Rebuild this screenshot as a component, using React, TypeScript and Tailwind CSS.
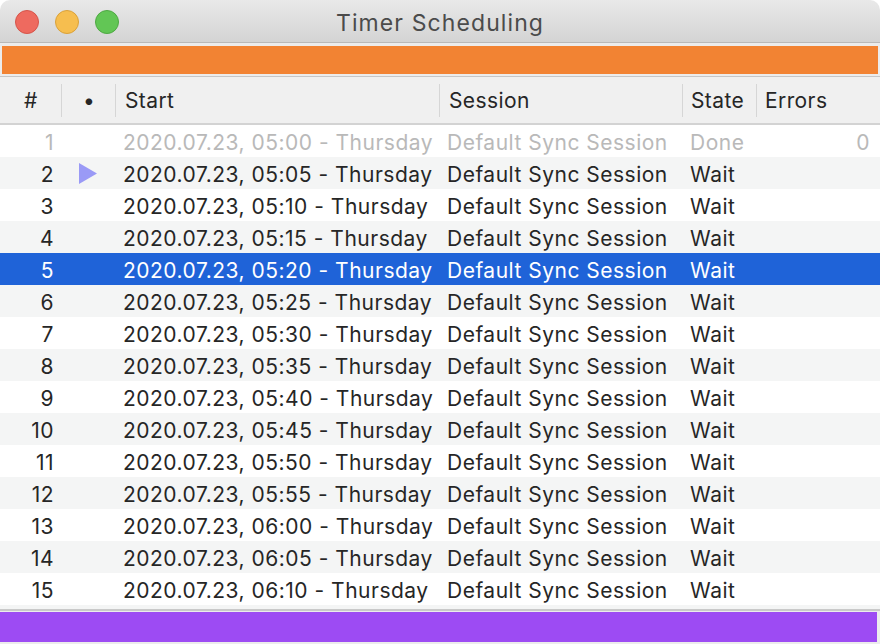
import React from "react";

const rows = Array.from({ length: 15 }, (_, i) => {
  const mins = 300 + i * 5;
  const h = String(Math.floor(mins / 60)).padStart(2, "0");
  const m = String(mins % 60).padStart(2, "0");
  return { n: i + 1, start: `2020.07.23, ${h}:${m} - Thursday` };
});

function HeaderCell({ children, sep = true, className = "" }: { children?: React.ReactNode; sep?: boolean; className?: string }) {
  return (
    <div className={`relative flex items-center h-full ${className}`}>
      {children}
      {sep && <div className="absolute right-0 top-[7px] bottom-[6px] w-px bg-[#d6d6d6]" />}
    </div>
  );
}

export default function App() {
  return (
    <div
      className="w-[880px] h-[644px] bg-white overflow-hidden flex flex-col rounded-t-[10px]"
      style={{ fontFamily: "Inter, 'Noto Sans', sans-serif" }}
    >
      {/* Title bar */}
      <div className="relative h-[43px] shrink-0 bg-gradient-to-b from-[#e9e9e9] to-[#d4d4d4] border-b border-[#b9b9b9] flex items-center justify-center">
        <div className="absolute left-[15px] top-[10px] flex gap-[16px]">
          <div className="w-[24px] h-[24px] rounded-full bg-[#ee6a5f] border border-[#d5544a]" />
          <div className="w-[24px] h-[24px] rounded-full bg-[#f6be4f] border border-[#d9a13a]" />
          <div className="w-[24px] h-[24px] rounded-full bg-[#62c655] border border-[#4ea843]" />
        </div>
        <div className="text-[23px] tracking-[1.1px] text-[#4b4b4b] leading-none pt-[4px]">Timer Scheduling</div>
      </div>

      {/* Orange bar */}
      <div className="shrink-0 bg-[#ececec] pt-[3px] pb-[2px] px-[2px] border-b border-[#c6c6c6]">
        <div className="h-[28px] bg-[#f28333]" />
      </div>

      {/* Header */}
      <div className="shrink-0 h-[48px] bg-[#f0f0f0] border-b-2 border-[#d3d3d3] grid grid-cols-[62px_54px_324px_243px_74px_1fr] text-[21px] tracking-[0.4px] text-[#262626]">
        <HeaderCell className="pl-[24px] pt-[2px]">#</HeaderCell>
        <HeaderCell className="justify-center pt-[2px]">•</HeaderCell>
        <HeaderCell className="pl-[9px] pt-[2px]">Start</HeaderCell>
        <HeaderCell className="pl-[9px] pt-[2px]">Session</HeaderCell>
        <HeaderCell className="pl-[8px] pt-[2px]">State</HeaderCell>
        <HeaderCell sep={false} className="pl-[8px] pt-[2px]">Errors</HeaderCell>
      </div>

      {/* Rows */}
      <div className="flex-1 flex flex-col">
        {rows.map((r) => {
          const done = r.n === 1;
          const sel = r.n === 5;
          const bg = sel ? "bg-[#1f63d8]" : r.n % 2 === 0 ? "bg-[#f4f5f5]" : "bg-white";
          const color = sel ? "text-white" : done ? "text-[#b9b9b9]" : "text-[#262626]";
          return (
            <div
              key={r.n}
              className={`h-[32px] shrink-0 grid grid-cols-[62px_54px_324px_243px_74px_1fr] items-center text-[21px] tracking-[0.5px] leading-none whitespace-nowrap pt-[2px] ${bg} ${color}`}
            >
              <div className="text-right pr-[8px]">{r.n}</div>
              <div className="flex justify-center">
                {r.n === 2 && (
                  <svg width="20" height="21" viewBox="0 0 20 21" className="-ml-[2px] -mt-[1px]">
                    <polygon points="1,0 19,10.5 1,21" fill="#9a9af6" />
                  </svg>
                )}
              </div>
              <div className="pl-[7px]">{r.start}</div>
              <div className="pl-[7px]">Default Sync Session</div>
              <div className="pl-[7px]">{done ? "Done" : "Wait"}</div>
              <div className="text-right pr-[10px]">{done ? "0" : ""}</div>
            </div>
          );
        })}
        <div className="flex-1 bg-[#f4f5f5]" />
      </div>

      {/* Purple bar */}
      <div className="shrink-0 bg-[#ececec] border-t-2 border-[#c9c9c9] pt-[1px] pb-[2px] pr-[3px]">
        <div className="h-[30px] bg-[#9d4bf3]" />
      </div>
    </div>
  );
}
